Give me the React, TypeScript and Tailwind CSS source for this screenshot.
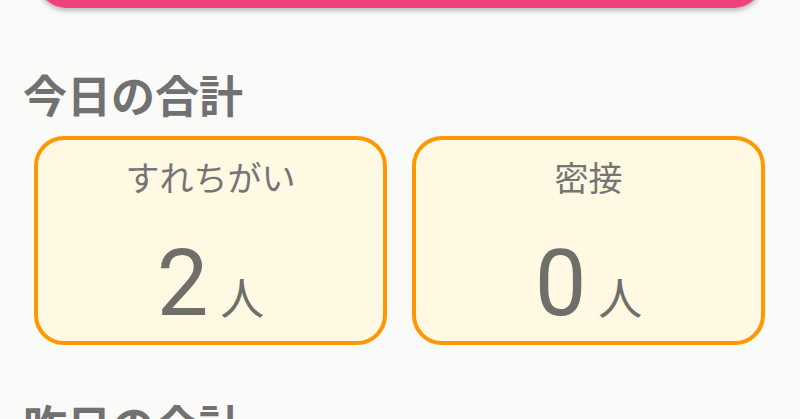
import React from "react";

const font = { fontFamily: '"Roboto", "Noto Sans CJK JP", sans-serif' };

interface StatCardProps {
  label: string;
  count: number;
}

function StatCard({ label, count }: StatCardProps) {
  return (
    <div className="h-[209px] rounded-[30px] border-[4px] border-[#ff9800] bg-[#fff8e2] flex flex-col items-center">
      <div className="mt-[19px] text-[34px] leading-[40px] text-[#757575]">{label}</div>
      <div className="mt-[40px] flex items-baseline text-[#6f6e69]">
        <span className="text-[92px] leading-[90px]">{count}</span>
        <span className="ml-[12px] text-[44px] leading-[44px]">人</span>
      </div>
    </div>
  );
}

export default function App() {
  return (
    <div className="w-[800px] h-[419px] overflow-hidden bg-[#fafaf9]" style={font}>
      <div className="mx-[38px] -mt-[52px] h-[60px] rounded-[28px] bg-[#ef417c] shadow-[0_3px_5px_rgba(0,0,0,0.25)]" />

      <h2 className="mt-[60px] ml-[23px] text-[44px] leading-[60px] font-bold text-[#717171]">今日の合計</h2>

      <div className="mt-[8px] grid grid-cols-2 gap-[25px] pl-[34px] pr-[35px]">
        <StatCard label="すれちがい" count={2} />
        <StatCard label="密接" count={0} />
      </div>

      <h2 className="mt-[53px] ml-[23px] text-[44px] leading-[60px] font-bold text-[#717171]">昨日の合計</h2>
    </div>
  );
}
